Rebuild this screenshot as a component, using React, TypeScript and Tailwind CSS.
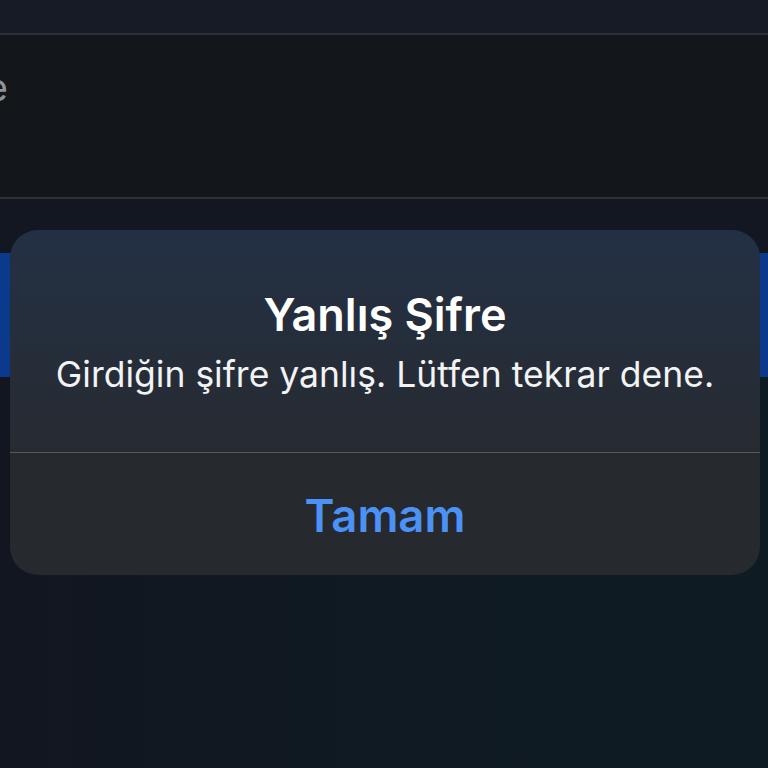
export default function App() {
  return (
    <div className="relative h-[768px] w-[768px] overflow-hidden bg-[#101822] font-['Inter',sans-serif]">
      <div className="h-[33px] bg-[#161b25]" />
      <div className="h-[2px] bg-[#2c3139]" />
      <div className="flex h-[162px] items-start bg-[#13171b] pt-[33px]">
        <div className="flex w-[8px] justify-end overflow-hidden">
          <span className="text-[38px] leading-none text-[#8e939a]">Şifre</span>
        </div>
      </div>
      <div className="h-[2px] bg-[#2c3139]" />
      <div className="h-[54px] bg-[#121722]" />
      <div className="h-[124px] bg-[#0b3a8c]" />
      <div className="h-[391px] bg-gradient-to-r from-[#121620] via-[#0f1a23] to-[#0f1b23]" />

      {/* alert */}
      <div className="absolute left-[10px] top-[230px] w-[750px] overflow-hidden rounded-[28px]">
        <div className="flex h-[222px] flex-col items-center bg-gradient-to-b from-[#233044] to-[#272b31] pt-[61px] text-white">
          <h1 className="text-[45px] font-semibold leading-[48px]">Yanlış Şifre</h1>
          <p className="mt-[16px] text-[35.5px] leading-[40px] text-[#f2f3f5]">
            Girdiğin şifre yanlış. Lütfen tekrar dene.
          </p>
        </div>
        <div className="h-px bg-[#55595e]" />
        <div className="flex h-[122px] items-center justify-center bg-[#26292e] pt-[3px]">
          <span className="text-[45.5px] font-semibold leading-none text-[#4b91f6]">Tamam</span>
        </div>
      </div>
    </div>
  );
}
